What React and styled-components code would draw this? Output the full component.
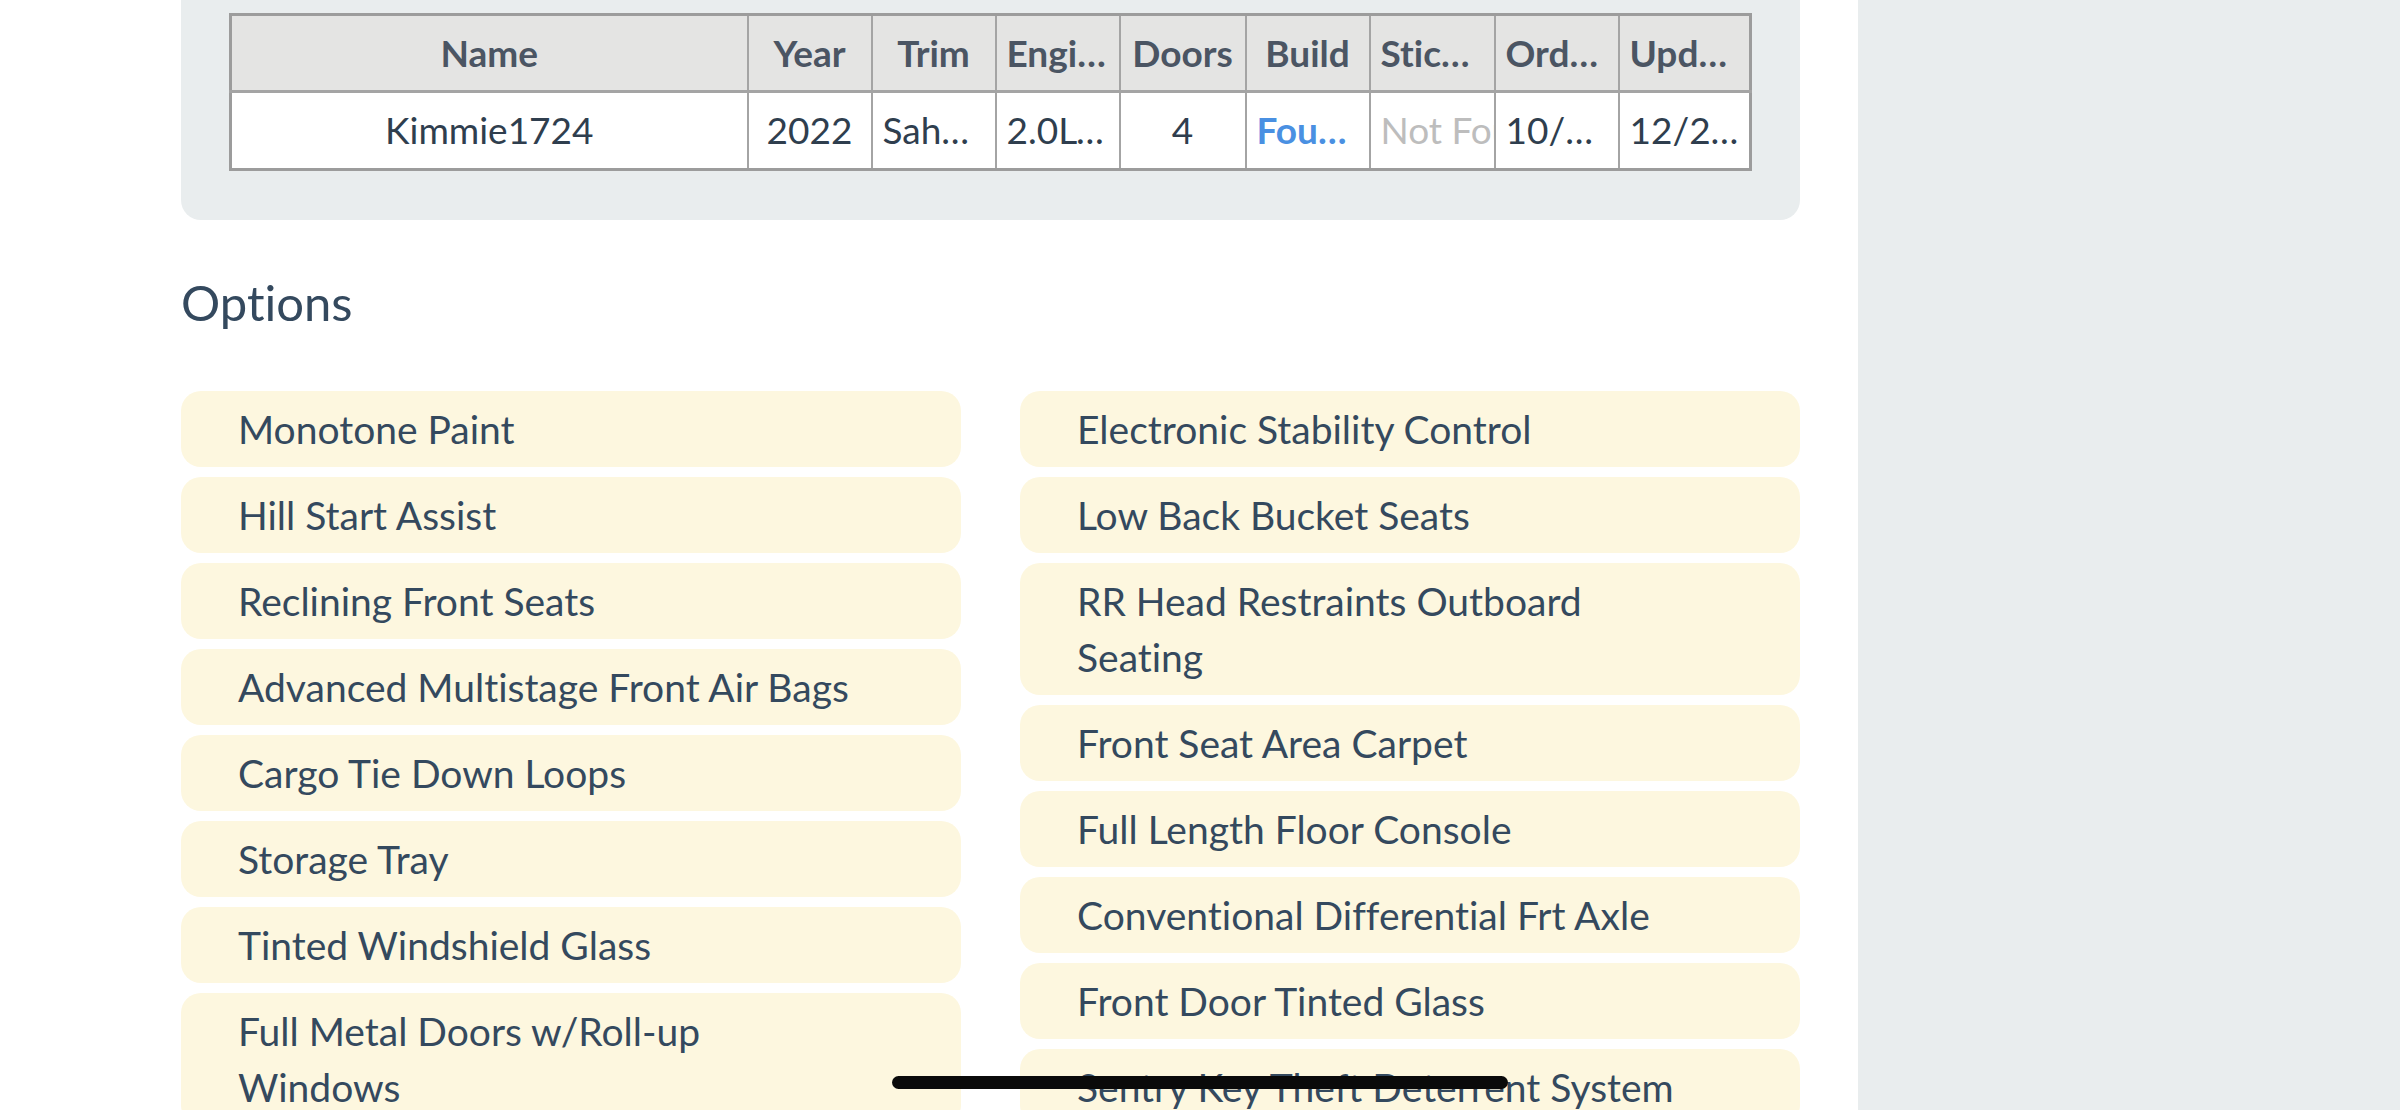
import React from "react";
import styled, { createGlobalStyle } from "styled-components";

const GlobalStyle = createGlobalStyle`
  html, body {
    margin: 0;
    padding: 0;
    background: #ffffff;
    font-family: Lato, "Open Sans", "Liberation Sans", sans-serif;
    font-variant-ligatures: none;
    color: #34495e;
  }
  * { box-sizing: border-box; }
`;

const Page = styled.div`
  display: grid;
  grid-template-columns: 1fr 542px;
  min-height: 100vh;
`;

const Main = styled.main`
  padding: 0 58px 0 181px;
  overflow: hidden;
  height: 100vh;
`;

const Sidebar = styled.aside`
  background: #e9edee;
  min-height: 100vh;
`;

const Card = styled.section`
  background: #e9edee;
  border-radius: 0 0 20px 20px;
  padding: 13px 48px 49px;
`;

const Table = styled.table`
  width: 100%;
  table-layout: fixed;
  border-collapse: collapse;
  border: 3px solid #9c9c9c;
  font-size: 37px;
`;

const Th = styled.th`
  background: #e4e4e3;
  color: #4b5563;
  font-weight: 700;
  height: 77px;
  padding: 0 10px 2px;
  border: 2px solid #a4a4a4;
  border-bottom-width: 3px;
  text-align: center;
  white-space: nowrap;
  overflow: hidden;
  text-overflow: ellipsis;
`;

const Td = styled.td`
  background: #ffffff;
  color: ${(p) => (p.$link ? "#4a90e2" : "#2f3e4e")};
  font-weight: ${(p) => (p.$link ? 700 : 400)};
  height: 78px;
  padding: 0 10px 2px;
  border: 2px solid #a4a4a4;
  text-align: center;
  white-space: nowrap;
  overflow: hidden;
  text-overflow: ellipsis;
`;

const Muted = styled.span`
  display: inline-block;
  color: #bdbdbd;
  white-space: nowrap;
`;

const Heading = styled.h2`
  margin: 53px 0 0;
  font-size: 49px;
  font-weight: 400;
  line-height: 1.2;
  color: #34495e;
`;

const OptionsGrid = styled.div`
  display: grid;
  grid-template-columns: 1fr 1fr;
  column-gap: 59px;
  margin-top: 59px;
  align-items: start;
`;

const OptionColumn = styled.div`
  display: flex;
  flex-direction: column;
  gap: 10px;
`;

const OptionItem = styled.div`
  background: #fdf7df;
  border-radius: 20px;
  padding: 10px 103px 10px 57px;
  font-size: 39px;
  line-height: 56px;
  color: #34495e;
`;

const HomeIndicator = styled.div`
  position: fixed;
  left: 50%;
  bottom: 21px;
  transform: translateX(-50%);
  width: 616px;
  height: 13px;
  border-radius: 7px;
  background: #0a0a0a;
`;

const columns = [
  { label: "Name", width: 517 },
  { label: "Year", width: 124 },
  { label: "Trim", width: 124 },
  { label: "Engine", width: 124 },
  { label: "Doors", width: 126 },
  { label: "Build", width: 124 },
  { label: "Sticker", width: 125 },
  { label: "Order Date", width: 124 },
  { label: "Updated", width: null },
];

const leftOptions = [
  "Monotone Paint",
  "Hill Start Assist",
  "Reclining Front Seats",
  "Advanced Multistage Front Air Bags",
  "Cargo Tie Down Loops",
  "Storage Tray",
  "Tinted Windshield Glass",
  "Full Metal Doors w/Roll-up Windows",
  "Rear Window Defroster",
];

const rightOptions = [
  "Electronic Stability Control",
  "Low Back Bucket Seats",
  "RR Head Restraints Outboard Seating",
  "Front Seat Area Carpet",
  "Full Length Floor Console",
  "Conventional Differential Frt Axle",
  "Front Door Tinted Glass",
  "Sentry Key Theft Deterrent System",
  "Rear Seat Area Carpet",
];

export default function App() {
  return (
    <>
      <GlobalStyle />
      <Page>
        <Main>
          <Card>
            <Table>
              <colgroup>
                {columns.map((c) => (
                  <col key={c.label} style={c.width ? { width: c.width } : undefined} />
                ))}
              </colgroup>
              <thead>
                <tr>
                  {columns.map((c) => (
                    <Th key={c.label}>{c.label}</Th>
                  ))}
                </tr>
              </thead>
              <tbody>
                <tr>
                  <Td>Kimmie1724</Td>
                  <Td>2022</Td>
                  <Td>Sahara</Td>
                  <Td>2.0L I4 DOHC</Td>
                  <Td>4</Td>
                  <Td $link>Found</Td>
                  <Td>
                    <Muted>Not Found</Muted>
                  </Td>
                  <Td>10/14/2021</Td>
                  <Td>12/21/2021</Td>
                </tr>
              </tbody>
            </Table>
          </Card>
          <Heading>Options</Heading>
          <OptionsGrid>
            <OptionColumn>
              {leftOptions.map((o) => (
                <OptionItem key={o}>{o}</OptionItem>
              ))}
            </OptionColumn>
            <OptionColumn>
              {rightOptions.map((o) => (
                <OptionItem key={o}>{o}</OptionItem>
              ))}
            </OptionColumn>
          </OptionsGrid>
        </Main>
        <Sidebar />
      </Page>
      <HomeIndicator />
    </>
  );
}
